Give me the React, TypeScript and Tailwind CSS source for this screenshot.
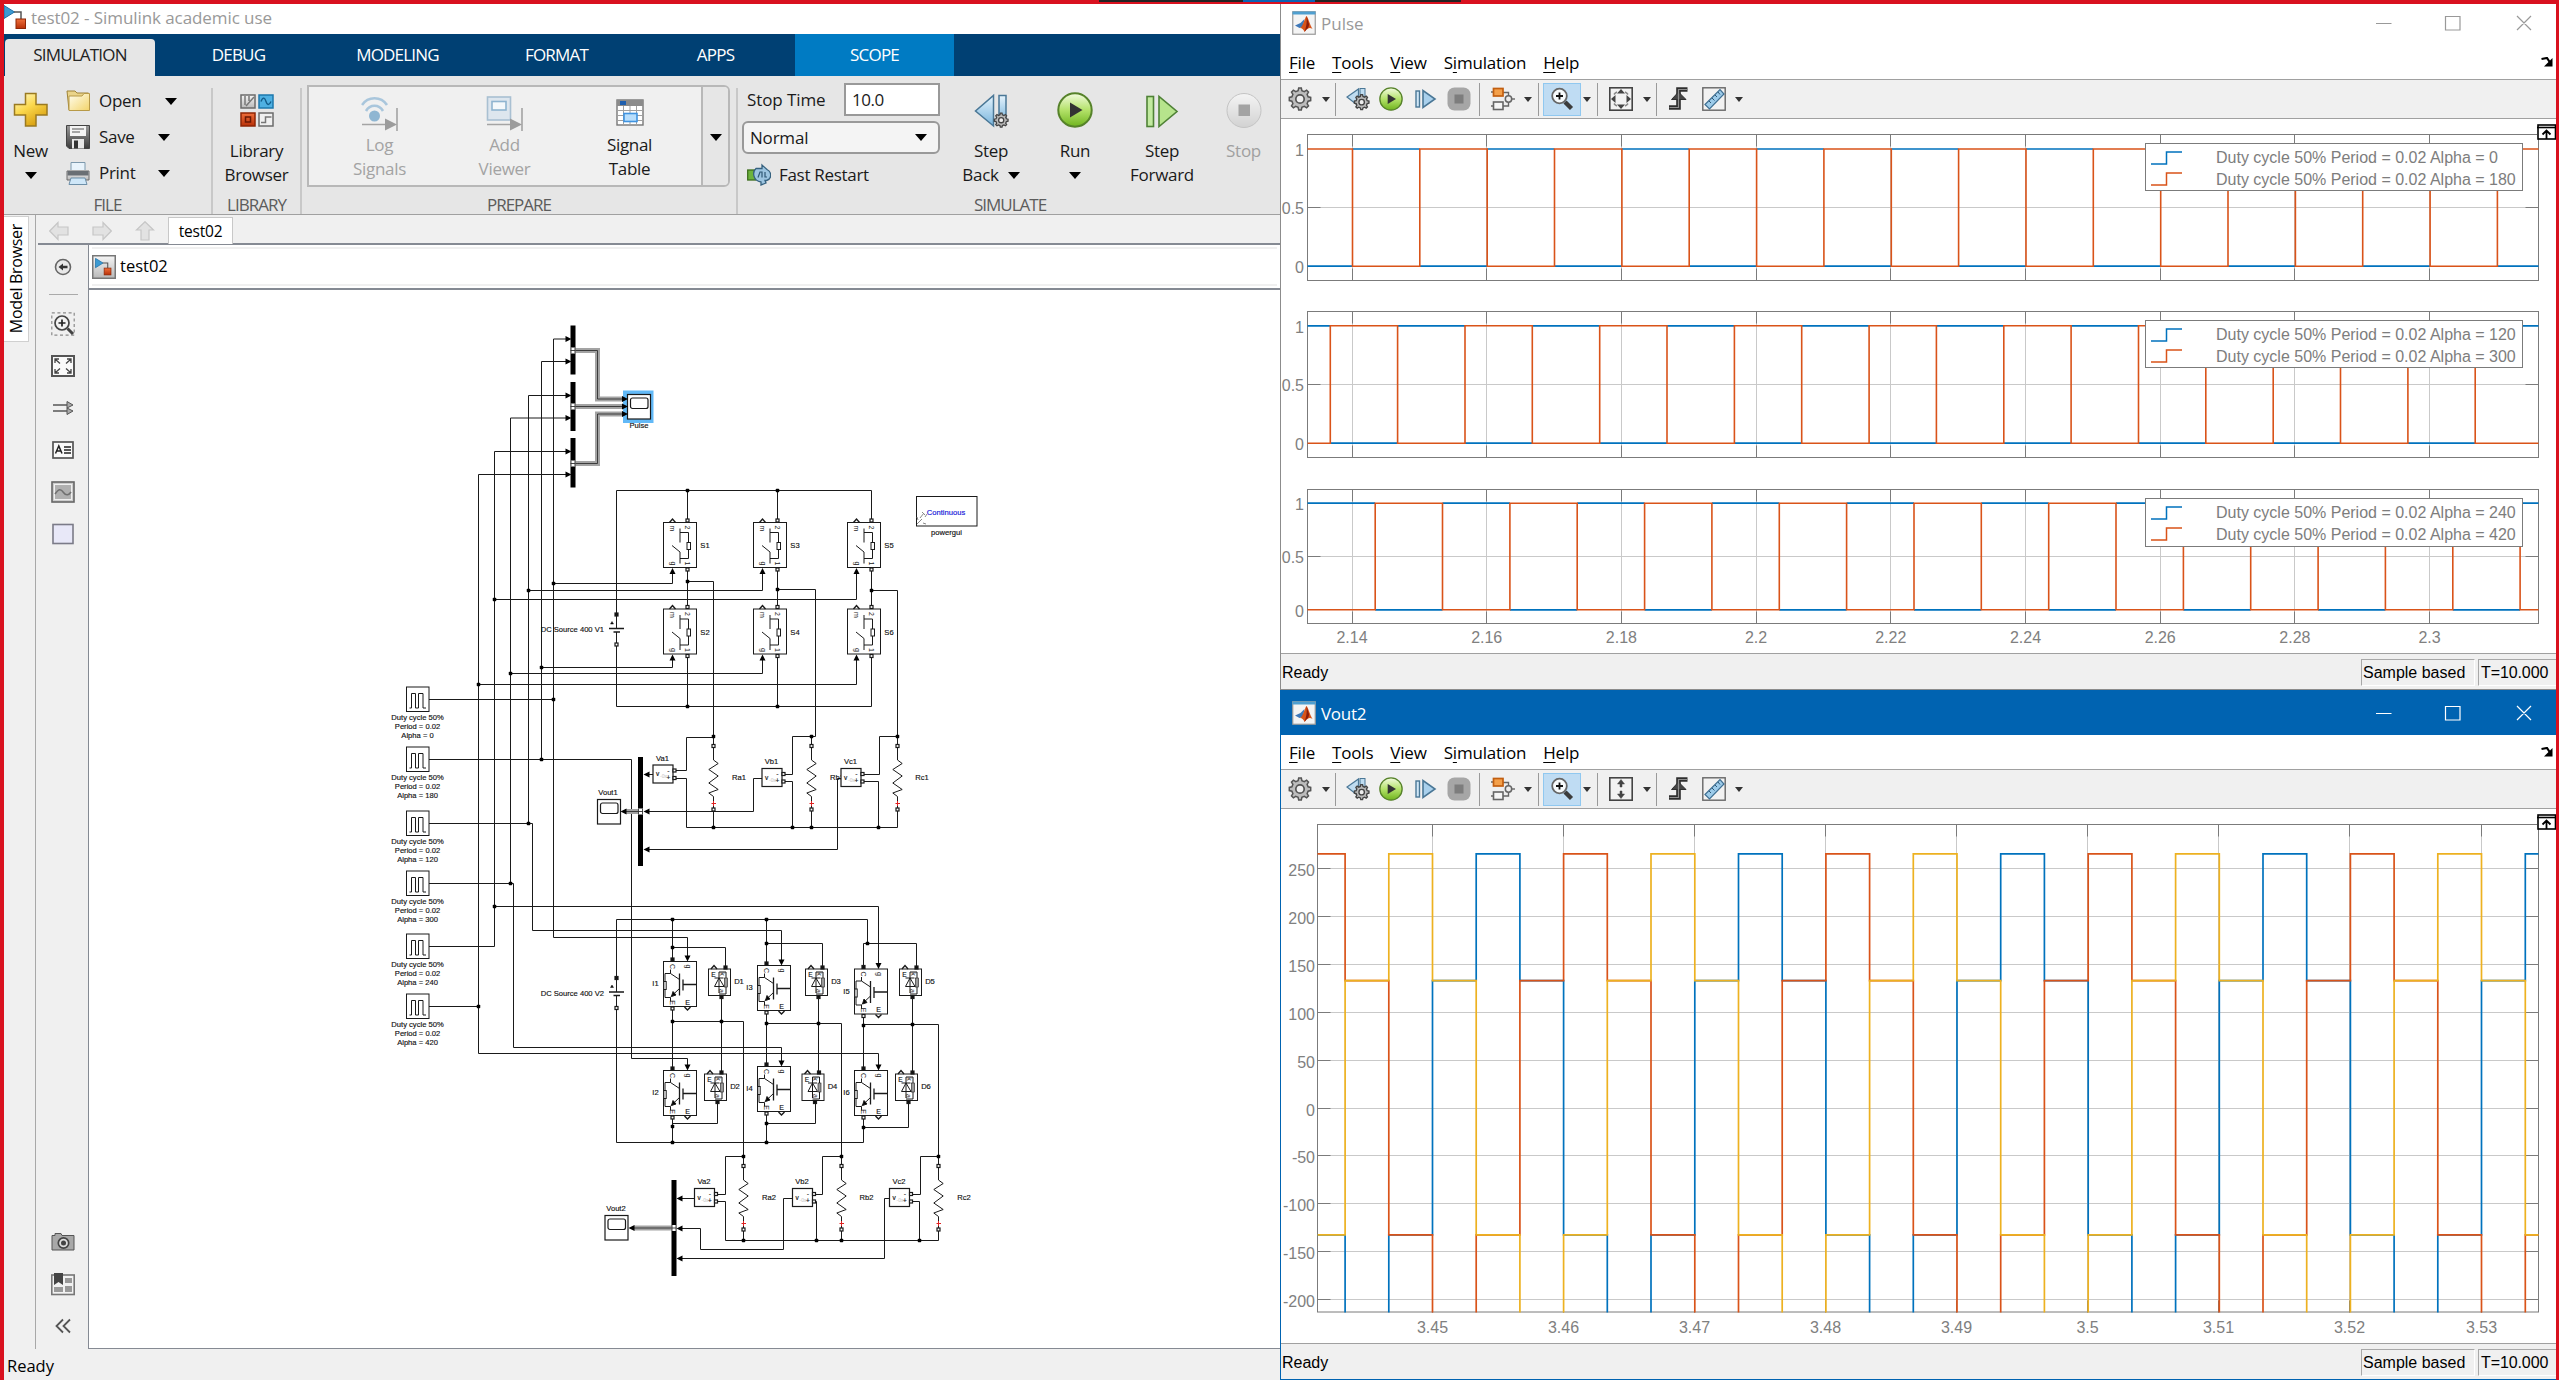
import React from "react";

const UI = "font-['Open_Sans','Noto_Sans',sans-serif]";
const ARIAL = "font-['Liberation_Sans',Arial,sans-serif]";

/* ------------------------------------------------------------------ */
/* Small helpers                                                        */
/* ------------------------------------------------------------------ */

type IconProps = { className?: string; children?: React.ReactNode; box?: string };

function Icon({ className = "h-6 w-6", children, box = "0 0 24 24" }: IconProps) {
  return (
    <svg viewBox={box} className={`shrink-0 ${className}`} fill="none">
      {children}
    </svg>
  );
}

function Caret({ className = "h-[7px] w-[12px]", fill = "#000" }: { className?: string; fill?: string }) {
  return (
    <svg viewBox="0 0 12 7" preserveAspectRatio="none" className={`shrink-0 ${className}`}>
      <path d="M0 0H12L6 7Z" fill={fill} />
    </svg>
  );
}

function Defs() {
  return (
    <svg className="absolute h-0 w-0">
      <defs>
        <linearGradient id="gold" x1="0" y1="0" x2="0.6" y2="1">
          <stop offset="0" stopColor="#fffbd0" />
          <stop offset="0.5" stopColor="#fbd84c" />
          <stop offset="1" stopColor="#d9a010" />
        </linearGradient>
        <linearGradient id="folder" x1="0" y1="0" x2="1" y2="1">
          <stop offset="0" stopColor="#fffef0" />
          <stop offset="1" stopColor="#f3d46a" />
        </linearGradient>
        <linearGradient id="green" x1="0" y1="0" x2="0" y2="1">
          <stop offset="0" stopColor="#f2fbdf" />
          <stop offset="0.5" stopColor="#b4e26a" />
          <stop offset="1" stopColor="#6fb41e" />
        </linearGradient>
        <linearGradient id="sky" x1="0" y1="0" x2="0" y2="1">
          <stop offset="0" stopColor="#e6f4fd" />
          <stop offset="1" stopColor="#78b4dc" />
        </linearGradient>
        <linearGradient id="steel" x1="0" y1="0" x2="0" y2="1">
          <stop offset="0" stopColor="#9a9a9a" />
          <stop offset="1" stopColor="#3c3c3c" />
        </linearGradient>
        <linearGradient id="silver" x1="0" y1="0" x2="0" y2="1">
          <stop offset="0" stopColor="#f6f6f6" />
          <stop offset="1" stopColor="#b8b8b8" />
        </linearGradient>
        <linearGradient id="rust" x1="0" y1="0" x2="0" y2="1">
          <stop offset="0" stopColor="#f0703c" />
          <stop offset="1" stopColor="#b83008" />
        </linearGradient>
        <linearGradient id="disabled" x1="0" y1="0" x2="0" y2="1">
          <stop offset="0" stopColor="#f4f4f4" />
          <stop offset="1" stopColor="#d2d2d2" />
        </linearGradient>
      </defs>
    </svg>
  );
}

/* ------------------------------------------------------------------ */
/* Ribbon icons                                                         */
/* ------------------------------------------------------------------ */

const ModelIcon = ({ className = "h-6 w-6", framed = false }: { className?: string; framed?: boolean }) => (
  <Icon className={className}>
    {framed && <rect x="0.75" y="0.75" width="22.5" height="22.5" fill="url(#silver)" stroke="#777" strokeWidth="1.5" />}
    <g transform={framed ? "translate(3.5 3) scale(0.72)" : ""}>
      <path d="M0 0.5L10.5 7L0 13.5Z" fill="#3c9ad2" stroke="#1f6fa5" />
      <path d="M10 7H17V14" stroke="#555" strokeWidth="1.5" />
      <rect x="12" y="14" width="9.5" height="9.5" fill="url(#rust)" stroke="#8e2606" />
    </g>
  </Icon>
);

const PlusIcon = () => (
  <Icon className="h-9 w-9" box="0 0 36 36">
    <path d="M12.5 1.5H23V12.5H34V23H23V34H12.5V23H1.5V12.5H12.5Z" fill="url(#gold)" stroke="#9a7a20" strokeWidth="1.5" />
  </Icon>
);
const OpenIcon = () => (
  <Icon>
    <path d="M1 2H9L11 4H22.5V21H3Z" fill="#ead48a" stroke="#a08438" />
    <path d="M3 21.5V7H16L18 4.5H23.5V21.5Z" fill="url(#folder)" stroke="#b89a48" />
  </Icon>
);
const SaveIcon = () => (
  <Icon>
    <path d="M0.5 0.5H23.5V23.5H3L0.5 21Z" fill="url(#steel)" stroke="#444" />
    <rect x="4" y="1" width="16" height="10" fill="#f4f4f4" />
    <path d="M6 4H18M6 7H14" stroke="#8a8a8a" strokeWidth="1.4" />
    <rect x="6" y="14" width="12" height="9.5" fill="#e8e8e8" />
    <rect x="8" y="15.5" width="4" height="8" fill="#333" />
  </Icon>
);
const PrintIcon = () => (
  <Icon>
    <path d="M5 9V1.5H19V9" fill="#e8f3fb" stroke="#7d99ad" />
    <path d="M1 10H23V19H1Z" fill="url(#silver)" stroke="#6c6c6c" />
    <rect x="1.5" y="10" width="21" height="4.5" fill="#6a6f74" />
    <path d="M5 17H19L21 23.5H3Z" fill="#cfe7f8" stroke="#6d8fa8" />
  </Icon>
);
const LibraryIcon = () => (
  <Icon className="h-9 w-9" box="0 0 36 36">
    <rect x="2" y="3" width="14" height="13" fill="url(#silver)" stroke="#6b6b6b" strokeWidth="1.5" />
    <path d="M6 4V13M10 4V9M7 14L15 5" stroke="#777" strokeWidth="1.5" />
    <rect x="20" y="3" width="14" height="13" fill="#4eb0e2" stroke="#1c78ad" strokeWidth="1.5" />
    <path d="M22 9.5C24 4 26 6 27 9.5S30 14 32 9.5" stroke="#125c8a" strokeWidth="1.4" />
    <rect x="2" y="21" width="14" height="13" fill="url(#rust)" stroke="#8e2606" strokeWidth="1.5" />
    <rect x="6.5" y="25" width="5" height="5" stroke="#6a1804" strokeWidth="1.5" />
    <rect x="20" y="21" width="14" height="13" fill="#f0f0f0" stroke="#6b6b6b" strokeWidth="1.5" />
    <path d="M22 30.5H26.500V25H32.500" stroke="#777" strokeWidth="1.5" />
  </Icon>
);
const LogIcon = () => (
  <Icon className="h-9 w-[38px]" box="0 0 38 36">
    <path d="M1 9C7 0 20 0 26 9" stroke="#a9c6dc" strokeWidth="2.6" />
    <path d="M5 15C9 8 18 8 22 15" stroke="#a9c6dc" strokeWidth="2.6" />
    <circle cx="13.5" cy="20" r="5.5" fill="#8fb6d2" />
    <path d="M1 28.5H26M36 12V35" stroke="#a4a4a4" strokeWidth="1.6" />
    <path d="M24 22.5L36 28.5L24 34.5Z" fill="#9c9c9c" />
  </Icon>
);
const ViewerIcon = () => (
  <Icon className="h-9 w-[38px]" box="0 0 38 36">
    <rect x="1.5" y="1" width="23" height="23" fill="#dde6ee" stroke="#a9c0d2" strokeWidth="1.6" />
    <rect x="6" y="5.5" width="14" height="8.5" fill="#f4f8fb" stroke="#8fb4d0" strokeWidth="1.6" />
    <path d="M1 28.5H26M36 12V35" stroke="#a4a4a4" strokeWidth="1.6" />
    <path d="M24 22.5L36 28.5L24 34.5Z" fill="#9c9c9c" />
  </Icon>
);
const TableIcon = () => (
  <Icon className="h-9 w-[28px]" box="0 0 28 36">
    <rect x="1" y="4" width="26" height="25" fill="#fff" stroke="#777" strokeWidth="1.4" />
    <rect x="1" y="4" width="26" height="6" fill="#8b8b8b" />
    <rect x="4" y="5" width="6" height="4" fill="#1f5fae" />
    <path d="M1 14.5H27M1 19.5H27M1 24.5H27M7.5 10V29M14 10V29M20.5 10V29" stroke="#a0a0a0" />
    <rect x="8" y="17.5" width="13" height="8" fill="#b8defc" stroke="#3f93e0" strokeWidth="1.6" />
  </Icon>
);
const gearPath =
  "M10.7 1H13.3L13.9 3.6L16.3 4.6L18.6 3.2L20.5 5.1L19.1 7.4L20.1 9.8L22.7 10.4V13.6L20.1 14.2L19.1 16.6L20.5 18.9L18.6 20.8L16.3 19.4L13.9 20.4L13.3 23H10.7L10.1 20.4L7.7 19.4L5.4 20.8L3.5 18.9L4.9 16.6L3.9 14.2L1.3 13.6V10.4L3.9 9.8L4.9 7.4L3.5 5.1L5.4 3.2L7.7 4.6L10.1 3.6Z";

const MiniGear = ({ x, y, s }: { x: number; y: number; s: number }) => (
  <g transform={`translate(${x} ${y}) scale(${s})`}>
    <path d={gearPath} fill="#b9b9b9" stroke="#444" strokeWidth="2" />
    <circle cx="12" cy="12" r="4" fill="#eee" stroke="#444" strokeWidth="2" />
  </g>
);
const StepBackIcon = () => (
  <Icon className="h-9 w-9" box="0 0 36 36">
    <path d="M20.5 3.5V34L2.5 19Z" fill="url(#sky)" stroke="#4a7796" strokeWidth="1.5" />
    <rect x="26" y="3.5" width="7" height="26" fill="url(#sky)" stroke="#4a7796" strokeWidth="1.5" />
    <MiniGear x={20.5} y={20.5} s={0.64} />
  </Icon>
);
const RunIcon = ({ className = "h-9 w-9" }: { className?: string }) => (
  <Icon className={className} box="0 0 36 36">
    <circle cx="18" cy="18" r="16.7" fill="url(#green)" stroke="#56822a" strokeWidth="2" />
    <path d="M13 10.5L25.5 18L13 25.5Z" fill="#333" />
  </Icon>
);
const StepForwardIcon = () => (
  <Icon className="h-9 w-9" box="0 0 36 36">
    <rect x="3" y="4.5" width="6.5" height="30" fill="#c2eaa0" stroke="#4f8236" strokeWidth="1.6" />
    <path d="M15 4.5V34.5L33 19.5Z" fill="#b6e48c" stroke="#4f8236" strokeWidth="1.6" />
  </Icon>
);
const StopIcon = () => (
  <Icon className="h-9 w-9" box="0 0 36 36">
    <circle cx="18" cy="18.5" r="17" fill="url(#disabled)" stroke="#c4c4c4" />
    <rect x="12.5" y="12.5" width="11.5" height="11.5" fill="#a3a3a3" />
  </Icon>
);
const FastRestartIcon = () => (
  <Icon className="h-6 w-6">
    <rect x="0.7" y="7" width="8" height="10" fill="#6db33c" stroke="#3d6e1e" strokeWidth="1.3" />
    <path d="M9 5.5L15 5.5V2L20 6.5C25 9 25 16 19.5 17.5H18L19 20L14 22V19C6 18 5 9 9 5.5Z" fill="#9cc4e0" stroke="#35617f" strokeWidth="1.3" />
    <path d="M11 14.5L13 9H15V14.5M18 9V14H20" stroke="#2f5874" strokeWidth="1.2" />
  </Icon>
);

/* ------------------------------------------------------------------ */
/* Simulink ribbon                                                      */
/* ------------------------------------------------------------------ */

function Section({ label, className, children }: { label: string; className: string; children: React.ReactNode }) {
  return (
    <div className={`flex flex-col ${className}`}>
      <div className="flex h-[115px] pt-[7px]">{children}</div>
      <div className="flex h-[23px] items-center justify-center pt-[3px] text-[17px] leading-none tracking-[-1px] text-[#5c5c5c]">{label}</div>
    </div>
  );
}

const Divider = () => <div className="mt-3 w-[2px] bg-[#c8c8c8]" />;

function BigButton({ icon, lines, caret, inlineCaret, muted, className }: {
  icon: React.ReactNode;
  lines: string[];
  caret?: boolean;
  inlineCaret?: boolean;
  muted?: boolean;
  className: string;
}) {
  return (
    <div className={`flex flex-col items-center pt-[9px] text-[17px] leading-6 tracking-[-0.3px] ${muted ? "text-[#a0a0a0]" : "text-[#1a1a1a]"} ${className}`}>
      {icon}
      <div className="mt-[11px]">{lines[0]}</div>
      {caret && <Caret className="mt-[9px] h-[7px] w-[12px]" />}
      {lines[1] && (
        <div className="flex items-center gap-[9px]">
          {lines[1]}
          {inlineCaret && <Caret />}
        </div>
      )}
    </div>
  );
}

function FileRow({ icon, label, gap }: { icon: React.ReactNode; label: string; gap: string }) {
  return (
    <div className="flex h-9 items-center text-[17px] tracking-[-0.3px] text-[#1a1a1a]">
      {icon}
      <span className={`ml-[9px] ${gap}`}>{label}</span>
      <Caret />
    </div>
  );
}

function GalleryItem({ icon, a, b, muted }: { icon: React.ReactNode; a: string; b: string; muted?: boolean }) {
  return (
    <div className={`flex w-[125px] flex-col items-center text-center text-[17px] leading-6 tracking-[-0.3px] ${muted ? "text-[#a3a3a3]" : "text-[#1a1a1a]"}`}>
      <div className="flex h-[46px] items-end pb-px">{icon}</div>
      <div>{a}</div>
      <div>{b}</div>
    </div>
  );
}

function Ribbon() {
  return (
    <div className="flex h-[139px] border-b border-[#a0a0a0] bg-[#e6e6e6]">
      <Section label="FILE" className="w-[207px]">
        <BigButton className="w-[53px]" icon={<PlusIcon />} lines={["New"]} caret />
        <div className="ml-[9px]">
          <FileRow icon={<OpenIcon />} label="Open" gap="w-[66px]" />
          <FileRow icon={<SaveIcon />} label="Save" gap="w-[59px]" />
          <FileRow icon={<PrintIcon />} label="Print" gap="w-[59px]" />
        </div>
      </Section>
      <Divider />
      <Section label="LIBRARY" className="w-[87px]">
        <BigButton className="w-full" icon={<LibraryIcon />} lines={["Library", "Browser"]} />
      </Section>
      <Divider />
      <Section label="PREPARE" className="w-[434px]">
        <div className="ml-[5px] mt-[2px] flex h-[102px] w-[423px] rounded-r-md border-2 border-[#b8b8b8] bg-[#f0f0f0]">
          <div className="flex flex-1 pl-2">
            <GalleryItem icon={<LogIcon />} a="Log" b="Signals" muted />
            <GalleryItem icon={<ViewerIcon />} a="Add" b="Viewer" muted />
            <GalleryItem icon={<TableIcon />} a="Signal" b="Table" />
          </div>
          <div className="flex w-[27px] items-center justify-center rounded-r border-l-2 border-[#b8b8b8] bg-[#e6e6e6] pt-[2px]">
            <Caret />
          </div>
        </div>
      </Section>
      <Divider />
      <Section label="SIMULATE" className="flex-1 pl-[2px]">
        <div className="ml-[2px] w-[198px] shrink-0 text-[17px] text-[#1a1a1a]">
          <div className="flex h-[33px] items-center justify-between pl-[5px]">
            <span className="tracking-[-0.1px]">Stop Time</span>
            <div className="flex h-full w-[96px] items-center border-2 border-[#999] bg-white pl-[6px] tracking-[-0.5px]">10.0</div>
          </div>
          <div className="mt-[5px] flex h-[33px] items-center justify-between rounded-md border-2 border-[#999] bg-[#f4f4f4] pl-[6px] pr-[11px] tracking-[-0.2px]">
            Normal
            <Caret />
          </div>
          <div className="mt-[9px] flex h-6 items-center gap-[8px] pl-[5px] tracking-[-0.3px]">
            <FastRestartIcon />
            Fast Restart
          </div>
        </div>
        <BigButton className="ml-[9px] w-[84px]" icon={<StepBackIcon />} lines={["Step", "Back"]} inlineCaret />
        <BigButton className="w-[84px]" icon={<RunIcon />} lines={["Run"]} caret />
        <BigButton className="w-[90px]" icon={<StepForwardIcon />} lines={["Step", "Forward"]} />
        <BigButton className="w-[73px]" icon={<StopIcon />} lines={["Stop"]} muted />
      </Section>
    </div>
  );
}

/* ------------------------------------------------------------------ */
/* Palette                                                              */
/* ------------------------------------------------------------------ */

function Palette() {
  return (
    <div className="flex w-[52px] flex-col items-center bg-[#f0f0f0] pb-[11px] pl-[2px] pt-[10px]">
      <Icon>
        <circle cx="12" cy="12" r="7.5" fill="#e8e8e8" stroke="#666" strokeWidth="1.6" />
        <path d="M7.5 12L12 8.5V10.8H16.5V13.2H12V15.5Z" fill="#333" />
      </Icon>
      <div className="mb-[17px] mt-[15px] h-px w-[29px] bg-[#aaa]" />
      <div className="flex flex-1 flex-col items-center gap-[18px]">
        <Icon>
          <rect x="0.8" y="0.8" width="22.4" height="22.4" stroke="#8a8a8a" strokeWidth="1.2" strokeDasharray="3 2.6" />
          <circle cx="11" cy="11" r="7" fill="#f2f2f2" stroke="#444" strokeWidth="1.7" />
          <path d="M11 7.5V14.5M7.5 11H14.5" stroke="#222" strokeWidth="1.7" />
          <path d="M16.5 16.5L22 22" stroke="#444" strokeWidth="3" />
        </Icon>
        <Icon>
          <rect x="1" y="2" width="22" height="20" fill="#fafafa" stroke="#555" strokeWidth="2" />
          <path d="M4 9V5H8M16 5H20V9M20 15V19H16M8 19H4V15M4.500 5.500L9 9.500M19.500 5.500L15 9.500M19.500 18.500L15 14.500M4.500 18.500L9 14.500" stroke="#444" strokeWidth="1.3" />
        </Icon>
        <Icon>
          <path d="M2 9H18M2 15H18" stroke="#555" strokeWidth="1.5" />
          <path d="M16 5.5L22 9L16 12ZM16 12L22 15L16 18.5Z" fill="#aaa" stroke="#555" />
        </Icon>
        <Icon>
          <rect x="2" y="4" width="20" height="16" fill="#fafafa" stroke="#555" strokeWidth="1.7" />
          <path d="M4.5 15.5L7.8 8L11 15.5M5.7 13H10M13 9H20M13 12H20M13 15H20" stroke="#222" strokeWidth="1.5" />
        </Icon>
        <Icon>
          <rect x="1" y="2" width="22" height="20" fill="#ccc" stroke="#666" strokeWidth="1.6" />
          <rect x="3.5" y="4.5" width="17" height="15" fill="#b0b0b0" stroke="#f0f0f0" />
          <path d="M4 14C8 8 10 9 12.5 12.5S18 15 20 12" stroke="#707070" strokeWidth="1.6" />
        </Icon>
        <Icon>
          <rect x="2" y="2.5" width="20" height="19" fill="#e8e8f8" stroke="#7b7b88" strokeWidth="1.6" />
        </Icon>
      </div>
      <div className="flex flex-col items-center gap-[18px]">
        <Icon>
          <path d="M1 5.500H4V3.500H10L11 5.500H23V20H1Z" fill="#a8a8a8" stroke="#555" />
          <circle cx="12.5" cy="13" r="5.2" fill="#ddd" stroke="#444" strokeWidth="1.7" />
          <circle cx="12.5" cy="13" r="2.5" fill="#444" />
        </Icon>
        <Icon>
          <rect x="0.8" y="3" width="22.4" height="19.5" fill="#f2f2f2" stroke="#777" strokeWidth="1.6" />
          <path d="M3 1H12V13L7.5 10L3 13Z" fill="#444" />
          <path d="M14 6H21V11H14ZM3 15H12V20H3ZM14 14H21V20H14Z" fill="#999" />
        </Icon>
        <Icon>
          <path d="M12 5.5L5.5 12L12 18.5M19 5.5L12.5 12L19 18.5" stroke="#555" strokeWidth="1.8" />
        </Icon>
      </div>
    </div>
  );
}

/* ------------------------------------------------------------------ */
/* Block diagram                                                        */
/* ------------------------------------------------------------------ */

type P = { x: number; y: number };

const Label = ({ x, y, children, fill = "#111", size = 7.6, anchor = "middle" }: P & {
  children: React.ReactNode;
  fill?: string;
  size?: number;
  anchor?: "middle" | "start" | "end";
}) => (
  <text x={x} y={y + size * 0.34} fontSize={size} textAnchor={anchor} fill={fill} stroke={fill} strokeWidth="0.15">
    {children}
  </text>
);

const Pin = ({ x, y, children }: P & { children: string }) => (
  <text transform={`translate(${x} ${y}) rotate(90)`} y={2.3} fontSize={7} textAnchor="middle" fill="#222" stroke="none">
    {children}
  </text>
);

const Port = ({ x, y, full }: P & { full?: boolean }) => (
  <rect x={x - 1.5} y={y - 1.5} width="3" height="3" fill={full ? "#111" : "#fff"} strokeWidth="1.2" />
);

const Dot = ({ x, y }: P) => <rect x={x - 1.75} y={y - 1.75} width="3.5" height="3.5" rx="0.8" fill="#000" stroke="none" />;

const Arrow = ({ x, y, dir }: P & { dir: "up" | "down" | "left" | "right" }) => {
  const d = {
    up: "l-3 6h6z",
    down: "l-3 -6h6z",
    left: "l6 -3v6z",
    right: "l-6 -3v6z",
  }[dir];
  return <path d={`M${x} ${y}${d}`} fill="#000" stroke="none" />;
};

const Switch = ({ x, y, name }: P & { name: string }) => (
  <g transform={`translate(${x} ${y})`}>
    <rect width="33" height="45" fill="#fff" />
    <path d="M6 0L9 -3.5L12 0" strokeWidth="1.4" />
    <path d="M16.5 6V20M16.5 10H25V20M25 27V36H16.5M16.5 41V29.5L8.5 23" />
    <rect x="23.5" y="20" width="3.5" height="7" fill="#fff" />
    <Pin x={9} y={6}>m</Pin>
    <Pin x={23.5} y={5}>2</Pin>
    <Pin x={9.5} y={41}>g</Pin>
    <Pin x={23.5} y={41}>1</Pin>
    <Port x={24} y={-2} />
    <Port x={24} y={47} />
    <Arrow x={9} y={45.5} dir="up" />
    <Label x={41.5} y={23}>{name}</Label>
  </g>
);

const Igbt = ({ x, y, name }: P & { name: string }) => (
  <g transform={`translate(${x} ${y})`}>
    <rect width="33" height="45" fill="#fff" />
    <path d="M21 45.5L24 48.5L27 45.5" strokeWidth="1.4" />
    <path d="M7 8V12H1.5V20M1.5 28V36H7V40M7 12L16 18M16 27L7 35.5" />
    <path d="M16 12V34M19.5 18V29M19.5 23H32.5" strokeWidth="1.3" />
    <path d="M8 35L9.5 30L12.5 33.5Z" fill="#000" />
    <rect x="0.3" y="20" width="2.4" height="8" fill="#fff" />
    <Pin x={8.5} y={5}>C</Pin>
    <Pin x={24.5} y={5}>g</Pin>
    <Pin x={9} y={41}>E</Pin>
    <Label x={24} y={41} size={7}>E</Label>
    <Port x={9} y={-2} full />
    <Port x={9} y={47} />
    <Arrow x={24} y={0} dir="down" />
    <Label x={-8} y={22}>{name}</Label>
  </g>
);

const Diode = ({ x, y, top, name }: P & { top: number; name: string }) => (
  <g transform={`translate(${x} ${y})`}>
    <rect width="22" height="26.5" fill="#fff" />
    <path d="M2.5 0L5.5 -3.5L8.5 0" strokeWidth="1.4" />
    <path d="M10.5 3V24M6 9H15M10.5 9L6 17.5H15.5ZM10.5 3H17.5V9M17.5 18V25H10.5" />
    <rect x="16" y="9" width="3" height="9" fill="#999" strokeWidth="0.6" />
    <Label x={5} y={6} size={6.5}>E</Label>
    <Pin x={13.5} y={5}>k</Pin>
    <Pin x={13} y={22}>a</Pin>
    <Port x={top} y={-1.5} full />
    <Port x={13} y={28} full />
    <Label x={30.5} y={12.5}>{name}</Label>
  </g>
);

const Scope = ({ x, y }: P) => (
  <g transform={`translate(${x} ${y})`}>
    <rect width="23" height="24.5" fill="#fff" strokeWidth="1.2" />
    <rect x="3" y="3.5" width="17.5" height="10.5" rx="2" strokeWidth="1.2" />
  </g>
);

const Generator = ({ y, alpha }: { y: number; alpha: string }) => (
  <g transform={`translate(406.5 ${y})`}>
    <rect y="-12.5" width="22.5" height="24.5" fill="#fff" />
    <path d="M3 8.5H5V-6H9V8.5H12V-6H16.500V8.5H19.500" />
    <Label x={11} y={17.5}>Duty cycle 50%</Label>
    <Label x={11} y={26.5}>Period = 0.02</Label>
    <Label x={11} y={35.5}>{`Alpha = ${alpha}`}</Label>
  </g>
);

const Meter = ({ x, y, name }: P & { name: string }) => (
  <g transform={`translate(${x} ${y})`}>
    <rect width="20" height="18" fill="#fff" strokeWidth="1.2" />
    <Label x={4.5} y={9} size={6.5}>v</Label>
    <Label x={10.5} y={11.5} size={5} fill="#d0d0d0">-0x</Label>
    <Label x={15.5} y={5.5} size={7}>-</Label>
    <Label x={15.5} y={12.5} size={6.5}>+</Label>
    <Port x={21.5} y={5.5} />
    <Port x={21.5} y={13} />
    <Label x={9.5} y={-7}>{name}</Label>
  </g>
);

const Resistor = ({ x, y, name, rail, dx = 25.5 }: P & { name: string; rail: number; dx?: number }) => (
  <g transform={`translate(${x} ${y})`}>
    <path d={`M0 0V23.5L4.7 27L-4.7 33L4.7 39.5L-4.7 46.5L4.7 53L-4.7 56.5L0 60V${rail}`} />
    <path d="M-2 67H2.5M0 64.5V69.5" stroke="#e02020" />
    <Port x={0} y={9.5} />
    <Port x={0} y={73} />
    <Dot x={0} y={0} />
    <Label x={dx} y={41}>{name}</Label>
  </g>
);

const Source = ({ y, name }: { y: number; name: string }) => (
  <g transform={`translate(616.5 ${y})`}>
    <path d="M0 -14V0M0 3.5V16" />
    <path d="M-7.5 0H7.5M-3 3.5H3.5" strokeWidth="1.4" />
    <path d="M-6 -4.5L-4.5 -7L-3 -4.5Z" fill="#000" strokeWidth="0.5" />
    <Port x={0} y={-14} full />
    <Port x={0} y={16} />
    <Label x={-12.5} y={1} anchor="end">{name}</Label>
  </g>
);

const Mux = ({ x, y, h, mid }: P & { h: number; mid: number }) => (
  <g stroke="none">
    <rect x={x} y={y} width="5" height={h} fill="#000" />
    <rect x={x} y={mid - 3} width="5" height="6" fill="#fff" />
    <path d={`M${x + 0.5} ${mid - 3}V${mid + 3}M${x + 4.5} ${mid - 3}V${mid + 3}M${x} ${mid}H${x + 5}`} stroke="#333" strokeWidth="0.9" />
  </g>
);

const Bus = ({ d }: { d: string }) => (
  <>
    <path d={d} stroke="#a3a3a3" strokeWidth="5" />
    <path d={d} stroke="#222" strokeWidth="0.8" />
  </>
);

const WIRES = [
  // gate signals to the three multiplexers
  "M568 339H553.5V937.5H687.5V957",
  "M568 361.5H541.5V759.5",
  "M568 395.5H528.5V823.5",
  "M568 418H510.5V883.5",
  "M568 451.5H494.5V946.5",
  "M568 474.5H478.5V1053.5H878.5V1066",
  // generator outputs
  "M429 699.5H553.5",
  "M429 759.5H631.5V1058.5H687.5V1066",
  "M429 823.5H532.5V930.5H781.5V960",
  "M429 883.5H513.5V1047.5H781.5V1062",
  "M429 946.5H494.5",
  "M429 1006.5H478.5",
  "M494.5 906.5H878.5V964",
  // gates of the upper bridge
  "M553.5 583.5H672.5V572",
  "M528.5 590.5H762.5V572",
  "M494.5 599.5H856.5V572",
  "M541.5 667.5H672.5V658",
  "M510.5 673.5H762.5V658",
  "M478.5 684.5H856.5V658",
  // upper bridge power rails
  "M616.5 614V490.5H871.5V522",
  "M687.5 490.5V522M777.5 490.5V522",
  "M616.5 645V706.5H871.5V654",
  "M687.5 654V706.5M777.5 654V706.5",
  "M687.5 568V609M777.5 568V609M871.5 568V609",
  "M687.5 581.5H713.5V736.5",
  "M777.5 589.5H815.5V736.5H811.5",
  "M871.5 590.5H897.5V736.5",
  // upper load and meters
  "M676 770.5H686.5V737.5H713.5M676 778.5H686.5V827.5H897.5",
  "M785 774.5H792.5V736.5H811.5M785 781.5H792.5V827.5",
  "M863 774.5H879.5V736.5H897.5M863 781.5H878.5V827.5",
  "M653 774.5H649",
  "M762 778.5H753.5V811.5H649",
  "M841 778.5H837.5V849.5H649",
  // lower bridge power rails
  "M616.5 978V919.5H867.5V943.5",
  "M616.5 1009V1142.5H863.5V1115",
  "M672.5 919.5V961M672.5 947.5H725.5V968",
  "M766.5 919.5V965M766.5 943.5H822.5V968",
  "M863.5 969V943.5H916.5V968",
  "M672.5 1006V1070M672.5 1021.5H743.5V1156.5M721.5 996V1074",
  "M766.5 1010V1066M766.5 1023.5H841.5V1156.5M818.5 996V1074",
  "M863.5 1014V1070M863.5 1024.5H938.5V1156.5M912.5 996V1074",
  "M672.5 1115V1142.5M717.5 1101V1123.5H672.5",
  "M766.5 1112V1142.5M815.5 1101V1123.5H766.5",
  "M908.5 1101V1127.5H863.5",
  // lower load and meters
  "M717 1194.5H725.5V1156.5H743.5M717 1201.5H725.5V1240.5H938.5",
  "M815 1194.5H822.5V1156.5H841.5M815 1201.5H816.5V1240.5",
  "M912 1194.5H920.5V1156.5H938.5M912 1201.5H919.5V1240.5",
  "M694 1198.5H682",
  "M792 1198.5H783.5V1249.5H700.5V1228.5H682",
  "M889 1198.5H884.5V1258.5H682",
];

const DOTS: [number, number][] = [
  [553.5, 583.5], [528.5, 590.5], [494.5, 599.5], [541.5, 667.5], [510.5, 673.5], [478.5, 684.5],
  [553.5, 699.5], [541.5, 759.5], [528.5, 823.5], [510.5, 883.5], [494.5, 906.5], [478.5, 1006.5],
  [687.5, 490.5], [777.5, 490.5], [687.5, 706.5], [777.5, 706.5],
  [687.5, 581.5], [777.5, 589.5], [871.5, 590.5],
  [713.5, 827.5], [792.5, 827.5], [811.5, 827.5], [878.5, 827.5],
  [672.5, 919.5], [766.5, 919.5], [867.5, 943.5], [672.5, 947.5], [766.5, 943.5],
  [672.5, 1021.5], [721.5, 1021.5], [766.5, 1023.5], [818.5, 1023.5], [863.5, 1025.5], [912.5, 1024.5],
  [672.5, 1126.5], [766.5, 1123.5], [863.5, 1127.5], [672.5, 1142.5], [766.5, 1142.5],
  [743.5, 1240.5], [816.5, 1240.5], [841.5, 1240.5], [919.5, 1240.5],
];

function Diagram() {
  return (
    <svg viewBox="89 290 1191 1058" className={`h-[1058px] w-[1191px] ${ARIAL}`} fill="none" stroke="#1a1a1a" strokeWidth="1">
      {WIRES.map((d) => (
        <path key={d} d={d} />
      ))}

      {[339, 361.5, 395.5, 418, 451.5, 474.5].map((y) => (
        <Arrow key={y} x={571.5} y={y} dir="right" />
      ))}
      <Bus d="M575 350.5H597.5V399H623" />
      <Bus d="M575 406.5H623" />
      <Bus d="M575 463.5H597.5V414H623" />
      <Mux x={570.5} y={325.5} h={49} mid={350.5} />
      <Mux x={570.5} y={382} h={49} mid={406.5} />
      <Mux x={570.5} y={438} h={49.5} mid={463.5} />

      <rect x="625" y="392.5" width="26.5" height="28.5" stroke="#62b9f7" strokeWidth="4" />
      <Scope x={627.5} y={394.5} />
      <Arrow x={628} y={399} dir="right" />
      <Arrow x={628} y={406.5} dir="right" />
      <Arrow x={628} y={414} dir="right" />
      <Label x={639} y={425.5}>Pulse</Label>

      <rect x="916.5" y="496.5" width="60.5" height="29.5" fill="#fff" />
      <path d="M917 524l5-5M922 512l3 3M918 520l-1 -3M923 523l3 1M920 518l4-5M925 517l2-3" stroke="#888" />
      <Label x={946} y={512.5} fill="#1414d8">Continuous</Label>
      <Label x={946.5} y={532.5}>powergui</Label>

      <Source y={628.5} name="DC Source 400 V1" />
      <Switch x={663.5} y={522.5} name="S1" />
      <Switch x={753.5} y={522.5} name="S3" />
      <Switch x={847.5} y={522.5} name="S5" />
      <Switch x={663.5} y={609} name="S2" />
      <Switch x={753.5} y={609} name="S4" />
      <Switch x={847.5} y={609} name="S6" />

      <Generator y={699.5} alpha="0" />
      <Generator y={759.5} alpha="180" />
      <Generator y={823.5} alpha="120" />
      <Generator y={883.5} alpha="300" />
      <Generator y={946.5} alpha="240" />
      <Generator y={1006.5} alpha="420" />

      <Bus d="M640 811.5H625" />
      <Mux x={638} y={757} h={109} mid={811.5} />
      <Scope x={597.5} y={799.5} />
      <Arrow x={620.5} y={811.5} dir="left" />
      <Label x={608} y={792.5}>Vout1</Label>
      {[774.5, 811.5, 849.5].map((y) => (
        <Arrow key={y} x={643.5} y={y} dir="left" />
      ))}
      <Resistor x={713.5} y={736.5} rail={91} name="Ra1" />
      <Resistor x={811.5} y={736.5} rail={91} name="Rb1" />
      <Resistor x={897.5} y={736.5} rail={91} name="Rc1" dx={24.5} />
      <Meter x={653} y={765} name="Va1" />
      <Meter x={762} y={768.5} name="Vb1" />
      <Meter x={841} y={768.5} name="Vc1" />

      <Source y={992} name="DC Source 400 V2" />
      <Igbt x={663.5} y={961.5} name="I1" />
      <Igbt x={757.5} y={965.5} name="I3" />
      <Igbt x={854.5} y={969} name="I5" />
      <Igbt x={663.5} y={1070.5} name="I2" />
      <Igbt x={757.5} y={1066.5} name="I4" />
      <Igbt x={854.5} y={1070.5} name="I6" />
      <Diode x={708.5} y={969} top={17} name="D1" />
      <Diode x={805.5} y={969} top={17} name="D3" />
      <Diode x={899.5} y={969} top={17} name="D5" />
      <Diode x={704.5} y={1074} top={17} name="D2" />
      <Diode x={802} y={1074} top={17} name="D4" />
      <Diode x={895.5} y={1074} top={17} name="D6" />

      <Resistor x={743.5} y={1156.5} rail={84} name="Ra2" />
      <Resistor x={841.5} y={1156.5} rail={84} name="Rb2" dx={25} />
      <Resistor x={938.5} y={1156.5} rail={84} name="Rc2" />
      <Meter x={694.5} y={1188.5} name="Va2" />
      <Meter x={792.5} y={1188.5} name="Vb2" />
      <Meter x={889.5} y={1188.5} name="Vc2" />
      <Bus d="M674 1228H634" />
      <Mux x={671.5} y={1180} h={96} mid={1228} />
      <Scope x={605} y={1215.5} />
      <Arrow x={628.5} y={1228} dir="left" />
      <Label x={616} y={1208.5}>Vout2</Label>
      {[1198.5, 1228.5, 1258.5].map((y) => (
        <Arrow key={y} x={676.5} y={y} dir="left" />
      ))}

      {DOTS.map(([x, y]) => (
        <Dot key={`${x}-${y}`} x={x} y={y} />
      ))}
    </svg>
  );
}

/* ------------------------------------------------------------------ */
/* Simulink window                                                      */
/* ------------------------------------------------------------------ */

const TABS = ["SIMULATION", "DEBUG", "MODELING", "FORMAT", "APPS", "SCOPE"];

function tabClass(name: string) {
  if (name === "SIMULATION") return "mr-1 mt-[5px] w-[150px] rounded-t bg-[#e6e6e6] text-[#222] pb-[5px]";
  if (name === "SCOPE") return "w-[159px] bg-[#007bc3] text-white";
  return "w-[159px] text-white";
}

const NavArrow = ({ turn }: { turn: string }) => (
  <Icon className={`h-5 w-5 ${turn}`} box="0 0 20 20">
    <path d="M0.7 10L9 1.5V6H19V14H9V18.5Z" fill="#e2e2e2" stroke="#c6c6c6" strokeWidth="1.2" />
  </Icon>
);

function SimulinkWindow() {
  return (
    <div className="flex w-[1276px] flex-col bg-[#f0f0f0]">
      <div className="flex h-[30px] items-start bg-white">
        <ModelIcon className="mt-px h-6 w-6" />
        <div className="ml-[3px] text-[17px] leading-[28px] tracking-[-0.08px] text-[#999]">test02 - Simulink academic use</div>
      </div>
      <div className="flex h-[42px] bg-[#004073] pl-px">
        {TABS.map((t) => (
          <div key={t} className={`flex items-center justify-center text-[17px] tracking-[-0.8px] ${tabClass(t)}`}>
            {t}
          </div>
        ))}
      </div>
      <Ribbon />
      <div className="flex min-h-0 flex-1">
        <div className="w-8 border-r border-[#a8a8a8] pt-px">
          <div className="flex h-[126px] w-[25px] items-center justify-center border-b border-r border-t border-[#d0d0d0] bg-white">
            <span className="rotate-180 whitespace-nowrap text-[16px] leading-none tracking-[-0.3px] text-black [writing-mode:vertical-rl]">Model Browser</span>
          </div>
        </div>
        <div className="flex min-w-0 flex-1 flex-col">
          <div className="ml-[2px] flex h-[30px] items-end border-b-2 border-[#858a93]">
            <div className="flex h-full w-[130px] items-center pl-[11px] pt-[3px]">
              <NavArrow turn="" />
              <div className="w-[23px]" />
              <NavArrow turn="rotate-180" />
              <div className="w-[23px]" />
              <NavArrow turn="rotate-90" />
            </div>
            <div className="mb-[-1px] flex h-[27px] w-[65px] items-center justify-center border border-b-0 border-[#c8c8c8] bg-white pt-[2px] text-[15.5px] tracking-[-0.2px] text-black">
              test02
            </div>
          </div>
          <div className="flex min-h-0 flex-1">
            <Palette />
            <div className="flex flex-1 flex-col border-b border-l border-[#858a93] bg-white">
              <div className="flex h-[45px] items-center border-b-2 border-[#858a93] px-[3px]">
                <div className="flex h-[39px] flex-1 items-center border-y-2 border-[#f0f0f0]">
                  <ModelIcon framed />
                  <span className="ml-[4px] text-[16.5px] text-black">test02</span>
                </div>
              </div>
              <Diagram />
            </div>
          </div>
        </div>
      </div>
      <div className="flex h-[31px] items-center pl-[3px] pt-1 text-[16.5px] text-black">Ready</div>
    </div>
  );
}

/* ------------------------------------------------------------------ */
/* Scope windows                                                        */
/* ------------------------------------------------------------------ */

const MatlabIcon = () => (
  <Icon>
    <rect x="0.75" y="0.75" width="22.5" height="22.5" fill="#f4f4f4" stroke="#999" strokeWidth="1.2" />
    <rect x="0.5" y="0.5" width="23" height="3" fill="#4f9fd0" />
    <path d="M3 14.5L8.5 12L12.5 8L11 16L7.5 17Z" fill="#3f78b8" />
    <path d="M8 17C11 16 13 6 14.5 5C16 6 18 14 20.5 18C18 16.5 16 16.5 12.5 21C12 19 10 17 8 17Z" fill="#d8541a" />
    <path d="M14.5 5C15 9 15 14 12.5 21C16 16.5 17 16.5 17 13Z" fill="#8c1d0c" />
  </Icon>
);

const MENUS: [string, string, string][] = [
  ["", "F", "ile"],
  ["", "T", "ools"],
  ["", "V", "iew"],
  ["S", "i", "mulation"],
  ["", "H", "elp"],
];

const Sep = ({ className }: { className: string }) => <div className={`h-[33px] w-px bg-[#9a9a9a] ${className}`} />;
const ToolCaret = ({ className }: { className: string }) => <Caret className={`h-[5px] w-[8px] ${className}`} fill="#333" />;

function ScopeToolbar({ fit }: { fit: "all" | "y" }) {
  return (
    <div className="flex h-[39px] items-center border-b border-[#a0a0a0] bg-[#f0f0f0]">
      <Icon className="ml-[7px] h-6 w-6">
        <path d={gearPath} fill="#bdbdbd" stroke="#555" strokeWidth="1.5" />
        <circle cx="12" cy="12" r="4.2" fill="#f0f0f0" stroke="#555" strokeWidth="1.7" />
      </Icon>
      <ToolCaret className="ml-[10px]" />
      <Sep className="ml-[5px]" />
      <Icon className="ml-[10px] h-6 w-6">
        <path d="M12.5 2V19L1 10Z" fill="#bfdcf0" stroke="#4a7796" strokeWidth="1.2" />
        <rect x="14" y="1.5" width="5" height="12" fill="#bfdcf0" stroke="#4a7796" />
        <MiniGear x={7.5} y={7} s={0.68} />
      </Icon>
      <RunIcon className="ml-[9px] h-6 w-6" />
      <Icon className="ml-[10px] h-6 w-6">
        <rect x="3" y="4" width="3.5" height="16" fill="#cfe6f7" stroke="#4a7796" strokeWidth="1.4" />
        <path d="M10 3.5V20.5L22 12Z" fill="#a9d0ec" stroke="#4a7796" strokeWidth="1.6" />
      </Icon>
      <Icon className="ml-[10px] h-6 w-6">
        <rect x="0.5" y="0.5" width="23" height="23" rx="7" fill="#a6a6a6" />
        <rect x="7.5" y="7.5" width="9" height="9" fill="#7d7d7d" />
      </Icon>
      <Sep className="ml-2" />
      <Icon className="ml-[11px] h-6 w-6">
        <path d="M0 5H3M12 5.5H17.500V9M12 19H17.500V15M0 19H2.500" stroke="#666" strokeWidth="1.4" />
        <rect x="2.5" y="1.5" width="9.5" height="7.5" fill="#f4a04a" stroke="#c25e10" strokeWidth="1.7" />
        <rect x="2.5" y="15" width="9.5" height="7.5" fill="#f6f6f6" stroke="#666" strokeWidth="1.6" />
        <circle cx="17.5" cy="12" r="3.2" fill="#eee" stroke="#666" strokeWidth="1.5" />
        <path d="M20.5 12H24" stroke="#666" strokeWidth="1.4" />
      </Icon>
      <ToolCaret className="ml-[9px]" />
      <Sep className="ml-[6px]" />
      <div className="ml-[4px] flex h-[33px] w-[38px] items-center justify-center border border-[#90c8f0] bg-[#bfdcf3]">
        <Icon>
          <circle cx="9.5" cy="9" r="7.3" fill="#f6fafc" stroke="#666" strokeWidth="1.8" />
          <path d="M9.5 5.5V12.5M6 9H13" stroke="#111" strokeWidth="1.8" />
          <path d="M15 15L21.5 21.5" stroke="#3c3c3c" strokeWidth="4.4" />
        </Icon>
      </div>
      <ToolCaret className="ml-[2px]" />
      <Sep className="ml-[6px]" />
      <Icon className="ml-[11px] h-6 w-6">
        <rect x="0.8" y="0.8" width="22.4" height="22.4" fill="#f2f2f2" stroke="#444" strokeWidth="1.6" />
        {fit === "all" ? (
          <>
            <path d="M12 2L16 6.5H8ZM12 22L16 17.5H8ZM2 12L6.5 8V16ZM22 12L17.5 8V16Z" fill="#444" />
            <path d="M5 7.500C6 6 7 5.500 8 5M19 7.500C18 6 17 5.500 16 5M5 16.500C6 18 7 18.500 8 19M19 16.500C18 18 17 18.500 16 19" stroke="#888" strokeWidth="1.5" />
          </>
        ) : (
          <path d="M12 2.5L15.5 7H13V10H11V7H8.5ZM12 21.5L15.5 17H13V14H11V17H8.5Z" fill="#444" stroke="#444" strokeWidth="0.5" />
        )}
      </Icon>
      <ToolCaret className="ml-[10px]" />
      <Sep className="ml-[5px]" />
      <Icon className="ml-[9px] h-6 w-6">
        <path d="M21.500 2.500H12.500V20.500H3" stroke="#2e2e2e" strokeWidth="4.6" />
        <path d="M5.500 12.500L12.500 5L20 12.500Z" fill="#444" stroke="#2e2e2e" />
        <path d="M21 2.500H12.500V20.500H3.500" stroke="#8f8f8f" strokeWidth="1.2" />
      </Icon>
      <Icon className="ml-[12px] h-6 w-6">
        <rect x="0.8" y="0.8" width="22.4" height="22.4" fill="#f2f2f2" stroke="#666" strokeWidth="1.4" />
        <path d="M3 17.5L18 2.5L22 7L7.5 22Z" fill="#9ccbea" stroke="#3f6f92" strokeWidth="1.2" />
        <path d="M7 14L9 16M10 11L12.5 13.5M13 8L15 10M16 5L18 7.5" stroke="#2e5876" />
      </Icon>
      <ToolCaret className="ml-[9px]" />
    </div>
  );
}

function ScopeWindow({ title, active, fit, children }: { title: string; active?: boolean; fit: "all" | "y"; children: React.ReactNode }) {
  return (
    <div className={`flex flex-col border-b border-l bg-white ${active ? "h-[690px] border-[#0063b1]" : "h-[686px] border-[#8c8c8c]"}`}>
      <div className={`flex items-center pl-[11px] ${active ? "h-[45px] bg-[#0063b1] text-white" : "h-[41px] text-[#999]"}`}>
        <div className={active ? "pt-px" : "pb-[3px]"}>
          <MatlabIcon />
        </div>
        <span className={`ml-[5px] flex-1 text-[17px] leading-none ${active ? "pt-px tracking-[-0.3px]" : "pb-[2px]"}`}>{title}</span>
        <Icon className={`mr-[24px] h-4 w-[156px] ${active ? "mb-0" : "mb-1"}`} box="0 0 156 16">
          <path d="M0 8.5H15.5M69.5 1.5H84V15H69.5ZM141 1L155 15M155 1L141 15" stroke="currentColor" strokeWidth="1.2" />
        </Icon>
      </div>
      <div className="flex h-[35px] items-center gap-[17px] border-b border-[#a0a0a0] pl-[8px] text-[17px] tracking-[-0.2px] text-black">
        {MENUS.map(([a, b, c]) => (
          <span key={c} className="leading-none">
            {a}
            <span className="underline decoration-1 underline-offset-[3px]">{b}</span>
            {c}
          </span>
        ))}
        <Icon className="ml-auto mr-[3px] h-[10px] w-[12px]" box="0 0 12 10">
          <path d="M0.5 2L6 1L9 5.5" stroke="#000" strokeWidth="2.2" />
          <path d="M11.5 1V9.5H3Z" fill="#000" />
        </Icon>
      </div>
      <ScopeToolbar fit={fit} />
      {children}
      <div className={`flex min-h-0 flex-1 items-center border-t border-[#a0a0a0] bg-[#f0f0f0] pt-px text-[16px] leading-none text-black ${ARIAL}`}>
        <span className="flex-1 pl-px pt-[2px]">Ready</span>
        <div className="mr-[3px] flex h-[27px] w-[114px] items-center border border-b-white border-l-[#a8a8a8] border-r-white border-t-[#a8a8a8] pl-px pt-[2px]">Sample based</div>
        <div className="flex h-[27px] w-[78px] items-center border border-r-0 border-b-white border-l-[#a8a8a8] border-t-[#a8a8a8] pl-[2px] pt-[2px] tracking-[-0.1px]">T=10.000</div>
      </div>
    </div>
  );
}

const GRID = "#c9c9c9";
const AXIS = "#7b7b7b";
const BLUE = "#0072bd";
const ORANGE = "#d95319";
const YELLOW = "#edb120";

const RestoreIcon = ({ y }: { y: number }) => (
  <g transform={`translate(2537 ${y})`}>
    <rect width="19" height="15" fill="#fff" />
    <rect x="1" y="1" width="17.5" height="14" fill="#fff" stroke="#000" strokeWidth="1.6" />
    <path d="M0 3.5H19" stroke="#000" strokeWidth="1.6" />
    <path d="M9.5 15V7M5.5 10.5L9.5 6.5L13.5 10.5" stroke="#000" strokeWidth="1.8" fill="none" />
  </g>
);

const PULSE_X0 = 1352.5;
const PULSE_STEP = 134.7;
const PLOT_RIGHT = 2538.5;

/** Square wave; `runsOnly` leaves out the edges, which the second trace covers. */
function stepPath(start: number, high: boolean, yHigh: number, yLow: number, runsOnly = false) {
  let level = high;
  let d = `M1307.5 ${level ? yHigh : yLow}`;
  for (let x = start; x < PLOT_RIGHT; x += PULSE_STEP / 2) {
    level = !level;
    const y = level ? yHigh : yLow;
    d += runsOnly ? `H${x.toFixed(1)}M${x.toFixed(1)} ${y}` : `H${x.toFixed(1)}V${y}`;
  }
  return `${d}H${PLOT_RIGHT}`;
}

const PULSES = [
  { top: 134.5, bottom: 280.5, one: 149, half: 207.5, zero: 266.2, start: PULSE_X0, high: true, legend: 143.5, lh: 47, a: "0", b: "180" },
  { top: 311.5, bottom: 457.5, one: 325.8, half: 384.5, zero: 443.2, start: 1330.3, high: false, legend: 320.5, lh: 47, a: "120", b: "300" },
  { top: 489.5, bottom: 623.5, one: 503.2, half: 556.5, zero: 609.8, start: 1375.2, high: false, legend: 498.5, lh: 48, a: "240", b: "420" },
];
const PULSE_TICKS = ["2.14", "2.16", "2.18", "2.2", "2.22", "2.24", "2.26", "2.28", "2.3"];

function PulsePlot() {
  return (
    <svg viewBox="1281 119 1275 534" className={`h-[534px] w-[1275px] shrink-0 ${ARIAL}`} fontSize="16" fill="none">
      {PULSES.map((p) => {
        const y = p.legend;
        return (
          <g key={p.a}>
            <path d={`M1307.5 ${p.half}H2538.5`} stroke={GRID} />
            {PULSE_TICKS.map((t, i) => {
              const x = Math.round(PULSE_X0 + i * PULSE_STEP) - 0.5;
              return (
                <g key={t}>
                  <path d={`M${x} ${p.top}V${p.bottom}`} stroke={GRID} />
                  <path d={`M${x} ${p.top}v12M${x} ${p.bottom}v-12`} stroke={AXIS} />
                </g>
              );
            })}
            <rect x="1307.5" y={p.top} width="1231" height={p.bottom - p.top} stroke={AXIS} />
            <path d={`M1307.5 ${p.half}h13M2538.5 ${p.half}h-13`} stroke={AXIS} />
            <path d={stepPath(p.start, !p.high, p.one, p.zero, true)} stroke={BLUE} strokeWidth="1.7" />
            <path d={stepPath(p.start, p.high, p.one, p.zero)} stroke={ORANGE} strokeWidth="1.6" />
            <g fill="#808080" textAnchor="end">
              <text x="1304" y={p.one + 7}>1</text>
              <text x="1304" y={p.half + 6.5}>0.5</text>
              <text x="1304" y={p.zero + 7}>0</text>
            </g>
            <rect x="2145.5" y={y} width="377" height={p.lh} fill="#fff" stroke={AXIS} />
            <path d={`M2151 ${y + 20.5}H2166.5V${y + 8.5}H2182`} stroke={BLUE} strokeWidth="1.5" />
            <path d={`M2151 ${y + 41.5}H2166.5V${y + 29.5}H2182`} stroke={ORANGE} strokeWidth="1.5" />
            <g fill="#7d7d7d">
              <text x="2216" y={y + 19.5}>{`Duty cycle 50% Period = 0.02 Alpha = ${p.a}`}</text>
              <text x="2216" y={y + 41.5}>{`Duty cycle 50% Period = 0.02 Alpha = ${p.b}`}</text>
            </g>
          </g>
        );
      })}
      <g fill="#808080" textAnchor="middle">
        {PULSE_TICKS.map((t, i) => (
          <text key={t} x={PULSE_X0 + i * PULSE_STEP - 0.5} y="643">{t}</text>
        ))}
      </g>
      <RestoreIcon y={124} />
    </svg>
  );
}

const LEVEL_Y: Record<number, number> = { 2: 853.8, 1: 980.6, [-1]: 1234.8, [-2]: 1361.8 };
const V_X0 = 1432.5;
const V_STEP = 131.13;
const V_LEFT = 1317.5;
const V_TICKS = ["3.45", "3.46", "3.47", "3.48", "3.49", "3.5", "3.51", "3.52", "3.53"];
const PHASES = [
  { color: BLUE, pattern: [-1, -2, -1, 1, 2, 1] },
  { color: ORANGE, pattern: [2, 1, -1, -2, -1, 1] },
  { color: YELLOW, pattern: [-1, 1, 2, 1, -1, -2] },
];

function phasePath(pattern: number[]) {
  let d = `M${V_LEFT} ${LEVEL_Y[pattern[0]]}`;
  for (let i = 1; i < 29; i++) {
    const x = V_X0 + ((i - 3) * V_STEP) / 3;
    if (x > PLOT_RIGHT) break;
    d += `H${x.toFixed(1)}V${LEVEL_Y[pattern[i % 6]]}`;
  }
  return `${d}H${PLOT_RIGHT}`;
}

function VoutPlot() {
  const rows = [250, 200, 150, 100, 50, 0, -50, -100, -150, -200];
  return (
    <svg viewBox="1281 809 1275 534" className={`h-[534px] w-[1275px] shrink-0 ${ARIAL}`} fontSize="16" fill="none">
      <defs>
        <clipPath id="voutArea">
          <rect x="1317" y="824" width="1222" height="488.5" />
        </clipPath>
      </defs>
      {rows.map((v, i) => {
        const y = Math.round(868 + i * 47.9) + 0.5;
        return (
          <g key={v}>
            <path d={`M1317.5 ${y}H2538.5`} stroke={GRID} />
            <path d={`M1317.5 ${y}h13M2538.5 ${y}h-13`} stroke={AXIS} />
            <text x="1315" y={y + 7.5} fill="#808080" textAnchor="end">{v}</text>
          </g>
        );
      })}
      {V_TICKS.map((t, i) => {
        const x = Math.round(V_X0 + i * V_STEP) - 0.5;
        return (
          <g key={t}>
            <path d={`M${x} 824.5V1312.5`} stroke={GRID} />
            <path d={`M${x} 824.5v12M${x} 1312.5v-12`} stroke={AXIS} />
            <text x={x} y="1333" fill="#808080" textAnchor="middle">{t}</text>
          </g>
        );
      })}
      <rect x="1317.5" y="824.5" width="1221" height="487.5" stroke={AXIS} />
      <g clipPath="url(#voutArea)" strokeWidth="1.7">
        {PHASES.map((p) => (
          <path key={p.color} d={phasePath(p.pattern)} stroke={p.color} />
        ))}
      </g>
      <RestoreIcon y={814} />
    </svg>
  );
}

/* ------------------------------------------------------------------ */
/* Desktop                                                              */
/* ------------------------------------------------------------------ */

export default function App() {
  return (
    <div className={`flex h-[1380px] w-[2559px] flex-col overflow-hidden bg-[#d9111f] ${UI}`}>
      <Defs />
      <div className="flex h-1 pl-[1099px]">
        <div className="h-[2px] w-[144px] bg-[#232323]" />
        <div className="h-[2px] w-[72px] bg-[#0b63b5]" />
        <div className="h-[2px] w-[146px] bg-[#232323]" />
      </div>
      <div className="flex h-[1376px] pl-1">
        <SimulinkWindow />
        <div className="flex w-[1276px] flex-col">
          <ScopeWindow title="Pulse" fit="all">
            <PulsePlot />
          </ScopeWindow>
          <ScopeWindow title="Vout2" active fit="y">
            <VoutPlot />
          </ScopeWindow>
        </div>
      </div>
    </div>
  );
}
